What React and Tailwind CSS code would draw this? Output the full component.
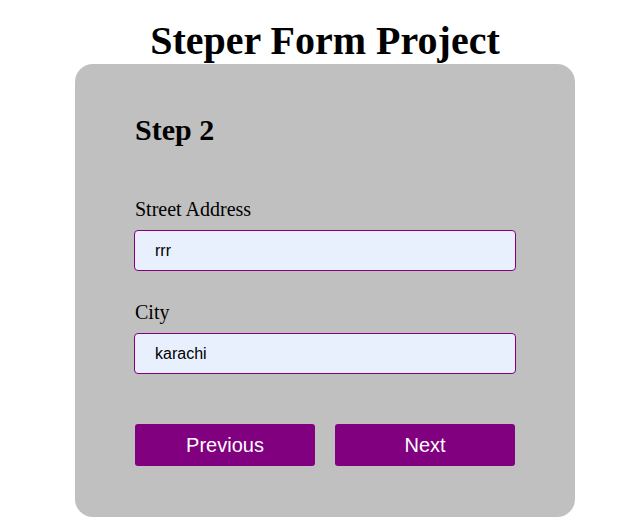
import React from 'react';

function Field({ label, value }) {
    return (
        <div className="flex flex-col">
            <label className="text-[20px] leading-[24px] text-black">{label}</label>
            <input
                type="text"
                defaultValue={value}
                className="mt-[9px] h-[41px] w-[382px] -ml-px rounded-[4px] border border-[#800080] bg-[#e8f0fe] pl-[20px] text-[16px] text-black outline-none font-['Liberation_Sans',Arial,sans-serif]"
            />
        </div>
    );
}

export default function App() {
    return (
        <div className="min-h-[526px] bg-white font-['Liberation_Serif','Times_New_Roman',serif]">
            <div className="ml-[75px] w-[500px] pt-[21px]">
                <h1 className="text-center text-[40px] leading-[40px] font-bold text-black">Steper Form Project</h1>
                <div className="mt-[3px] h-[453px] rounded-[18px] bg-[#c0c0c0] pl-[60px] pr-[59px] pt-[50px]">
                    <h2 className="text-[30px] leading-[32px] font-bold text-black">Step 2</h2>
                    <div className="mt-[51px] flex flex-col gap-[29px]">
                        <Field label="Street Address" value="rrr" />
                        <Field label="City" value="karachi" />
                    </div>
                    <div className="mt-[50px] flex gap-[20px] font-['Liberation_Sans',Arial,sans-serif]">
                        <button type="button" className="h-[42px] w-[180px] rounded-[3px] bg-[#800080] text-[20px] text-white">
                            Previous
                        </button>
                        <button type="button" className="h-[42px] w-[180px] rounded-[3px] bg-[#800080] text-[20px] text-white">
                            Next
                        </button>
                    </div>
                </div>
            </div>
        </div>
    );
}
